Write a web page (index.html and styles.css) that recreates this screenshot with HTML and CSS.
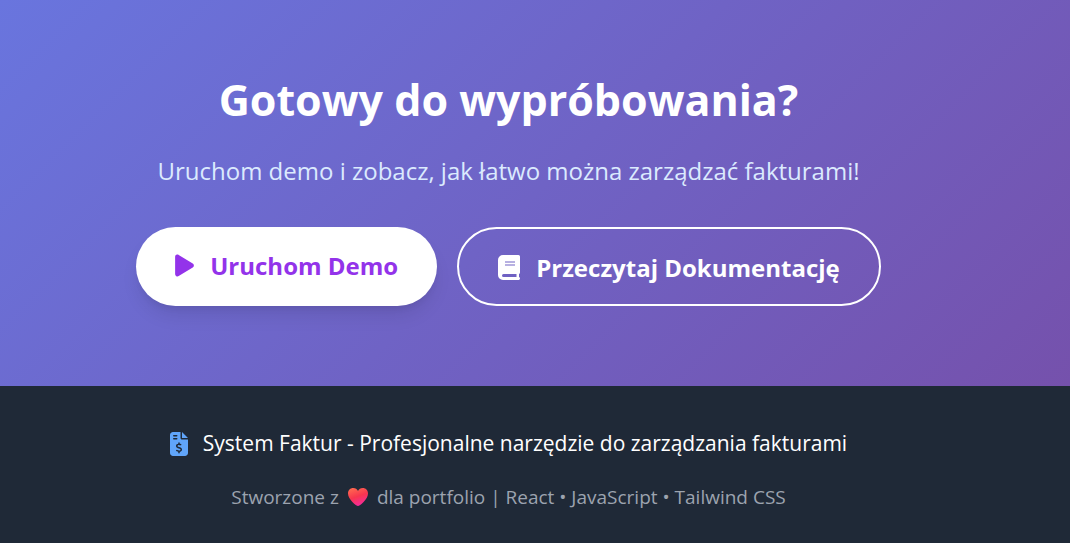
FILE: index.html
```html
<!DOCTYPE html>
<html lang="pl">
<head>
<meta charset="utf-8">
<meta name="viewport" content="width=device-width, initial-scale=1">
<title>System Faktur</title>
<link rel="stylesheet" href="styles.css">
</head>
<body>
<section class="cta">
  <h2 class="cta-title">Gotowy do wypróbowania?</h2>
  <p class="cta-lead">Uruchom demo i zobacz, jak łatwo można zarządzać fakturami!</p>
  <div class="cta-actions">
    <a class="btn btn-primary" href="#demo">
      <svg class="icon-play" viewBox="0 0 384 512" aria-hidden="true"><path fill="currentColor" d="M73 39c-14.8-9.1-33.4-9.4-48.5-.9S0 62.6 0 80V432c0 17.4 9.4 33.4 24.5 41.9s33.7 8.1 48.5-.9L361 297c14.3-8.7 23-24.2 23-41s-8.7-32.2-23-41L73 39z"/></svg>
      <span>Uruchom Demo</span>
    </a>
    <a class="btn btn-outline" href="#docs">
      <svg class="icon-book" viewBox="0 0 22 25" aria-hidden="true"><path fill="currentColor" fill-rule="evenodd" d="M5 0H20.5A1.5 1.5 0 0 1 22 1.500V17.500C22 18.300 21.600 18.800 21 19V22C21.600 22.200 22 22.800 22 23.500C22 24.300 21.300 25 20.500 25H5A5 5 0 0 1 0 20V5A5 5 0 0 1 5 0ZM5.500 19A1.500 1.500 0 0 0 5.500 22H18.500V19ZM7 6.500V7.500H17V6.500ZM7 9.500V10.500H17V9.500Z"/></svg>
      <span>Przeczytaj Dokumentację</span>
    </a>
  </div>
</section>
<footer class="footer">
  <p class="footer-name">
    <svg class="icon-invoice" viewBox="0 0 384 512" aria-hidden="true"><path fill="currentColor" d="M64 0C28.7 0 0 28.7 0 64V448c0 35.3 28.7 64 64 64H320c35.3 0 64-28.7 64-64V160H256c-17.7 0-32-14.3-32-32V0H64zM256 0V128H384L256 0zM64 80c0-8.8 7.2-16 16-16h64c8.8 0 16 7.2 16 16s-7.2 16-16 16H80c-8.8 0-16-7.2-16-16zm0 64c0-8.8 7.2-16 16-16h64c8.8 0 16 7.2 16 16s-7.2 16-16 16H80c-8.8 0-16-7.2-16-16zm128 72c8.8 0 16 7.2 16 16v17.3c8.5 1.2 16.7 3.1 24.1 5.1c8.5 2.3 13.6 11 11.3 19.6s-11 13.6-19.6 11.3c-11.1-3-22-5.2-32.1-5.3c-8.4-.1-17.4 1.8-23.6 5.5c-5.7 3.4-8.1 7.3-8.1 12.8c0 3.7 1.3 6.5 7.3 10.1c6.9 4.1 16.6 7.1 29.2 10.9l.5 .1c11.3 3.4 25.3 7.6 36.3 14.6c12.1 7.6 22.4 19.7 22.7 38.2c.3 19.3-9.6 33.3-22.9 41.6c-7.7 4.8-16.4 7.6-25.1 9.1V440c0 8.8-7.2 16-16 16s-16-7.2-16-16V422.2c-11.2-2.1-21.7-5.7-30.9-8.9c-2.1-.7-4.2-1.4-6.2-2.1c-8.4-2.8-12.9-11.9-10.1-20.2s11.9-12.9 20.2-10.1c2.5 .8 4.8 1.6 7.1 2.4c13.6 4.6 24.6 8.4 36.3 8.7c9.1 .3 17.9-1.7 23.7-5.3c5.1-3.2 7.9-7.3 7.8-14c-.1-4.6-1.8-7.8-7.7-11.6c-6.8-4.3-16.5-7.4-29-11.2l-1.6-.5c-11-3.3-24.3-7.3-34.8-13.7c-12-7.2-22.6-18.9-22.7-37.3c-.1-19.4 10.8-32.8 23.8-40.5c7.5-4.4 15.8-7.2 24.1-8.7V232c0-8.8 7.2-16 16-16z"/></svg>
    <span>System Faktur - Profesjonalne narzędzie do zarządzania fakturami</span>
  </p>
  <p class="footer-meta">
    <span>Stworzone z</span>
    <svg class="icon-heart" viewBox="0 0 20 18" role="img" aria-label="serce"><defs><linearGradient id="heart" x1="0.2" y1="0" x2="0.6" y2="1"><stop offset="0" stop-color="#ff6a50"/><stop offset="0.5" stop-color="#f8364f"/><stop offset="1" stop-color="#f52aa0"/></linearGradient></defs><path fill="url(#heart)" d="M10 18C8.500 18 0 11.500 0 5.500C0 2.200 2.300 0 5.200 0C7.400 0 9.200 1.200 10 2.900C10.800 1.200 12.600 0 14.800 0C17.700 0 20 2.200 20 5.500C20 11.500 11.500 18 10 18Z"/></svg>
    <span>dla portfolio | React • JavaScript • Tailwind CSS</span>
  </p>
</footer>
</body>
</html>
```
FILE: styles.css
```css
body {
  display: flex;
  flex-direction: column;
  min-height: 100vh;
  margin: 0;
  background: #1f2937;
  font-family: "Segoe UI", "Open Sans", "Noto Sans", sans-serif;
}

.cta {
  padding: 72px 73px 80px 20px;
  background: linear-gradient(135deg, #6975de 0%, #7551ac 100%);
  text-align: center;
}

.cta-title {
  margin: 0 0 25px;
  color: #fff;
  font-size: 43px;
  font-weight: 700;
  line-height: 56px;
}

.cta-lead {
  margin: 0 0 39px;
  color: #dbeafe;
  font-size: 24px;
  line-height: 35px;
}

.cta-actions {
  display: flex;
  flex-wrap: wrap;
  justify-content: center;
  gap: 20px;
}

.btn {
  display: flex;
  align-items: flex-start;
  gap: 16px;
  padding: 21px 39px 19px;
  border-radius: 40px;
  font-size: 24px;
  font-weight: 700;
  line-height: 35px;
  text-decoration: none;
}

.btn svg {
  height: 25px;
  margin-top: 5px;
}

.btn-primary {
  background: #fff;
  color: #9333ea;
  box-shadow: 0 12px 19px -4px rgba(0, 0, 0, 0.1), 0 5px 8px -5px rgba(0, 0, 0, 0.1);
}

.btn-outline {
  border: 2px solid #fff;
  color: #fff;
}

.icon-play {
  width: 19px;
}

.icon-book {
  width: 22px;
}

.footer {
  padding: 40px 73px 30px 20px;
  text-align: center;
}

.footer-name,
.footer-meta {
  display: flex;
  align-items: center;
  justify-content: center;
  margin: 0;
}

.footer-name {
  gap: 15px;
  margin-bottom: 21px;
  color: #fff;
  font-size: 21px;
  line-height: 35px;
}

.footer-meta {
  gap: 9px;
  color: #9ca3af;
  font-size: 19px;
  line-height: 30px;
}

.icon-invoice {
  width: 18px;
  height: 24px;
  color: #60a5fa;
}

.icon-heart {
  width: 20px;
  height: 18px;
}
```
